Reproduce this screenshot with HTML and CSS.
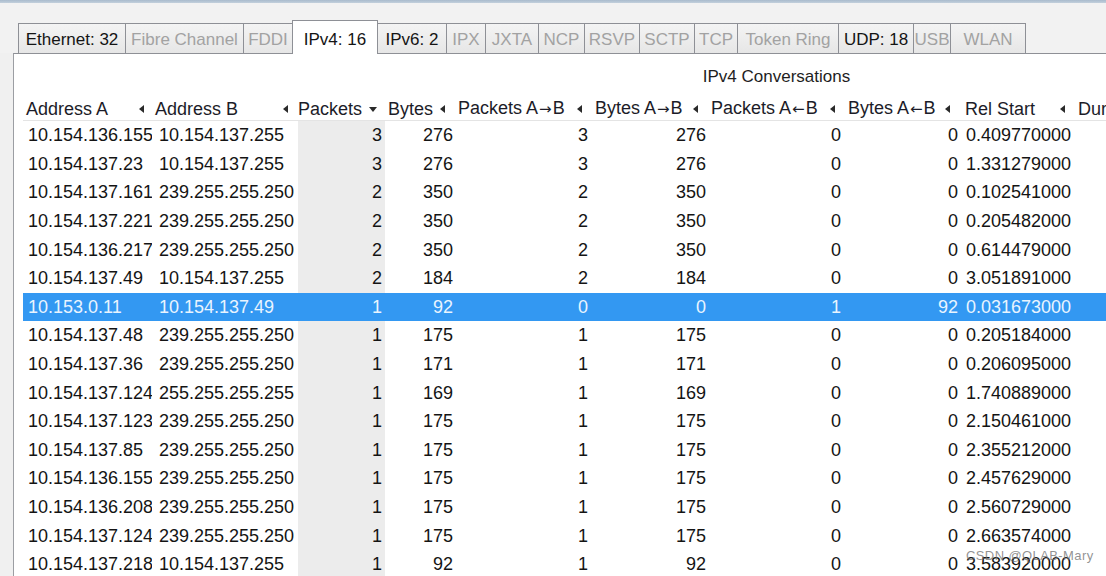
FILE: index.html
```html
<!DOCTYPE html>
<html>
<head>
<meta charset="utf-8">
<link rel="stylesheet" href="styles.css">
</head>
<body>
<div class="frame"></div>
<div class="tabs">
  <div class="tab">Ethernet: 32</div>
  <div class="tab dis">Fibre Channel</div>
  <div class="tab dis">FDDI</div>
  <div class="tab active">IPv4: 16</div>
  <div class="tab">IPv6: 2</div>
  <div class="tab dis">IPX</div>
  <div class="tab dis">JXTA</div>
  <div class="tab dis">NCP</div>
  <div class="tab dis">RSVP</div>
  <div class="tab dis">SCTP</div>
  <div class="tab dis">TCP</div>
  <div class="tab dis">Token Ring</div>
  <div class="tab">UDP: 18</div>
  <div class="tab dis">USB</div>
  <div class="tab dis">WLAN</div>
</div>
<div class="panel">
  <div class="sheet">
    <div class="title">IPv4 Conversations</div>
    <table class="grid">
      <colgroup>
        <col class="c-a"><col class="c-b"><col class="c-pk"><col class="c-by"><col class="c-pab"><col class="c-bab"><col class="c-pba"><col class="c-bba"><col class="c-rs"><col class="c-du">
      </colgroup>
      <thead>
        <tr>
          <th class="hpa"><span class="h">Address A<i class="tri"></i></span></th>
          <th><span class="h">Address B<i class="tri"></i></span></th>
          <th class="hp0"><span class="h">Packets<i class="tri down"></i></span></th>
          <th><span class="h">Bytes<i class="tri"></i></span></th>
          <th><span class="h"><span>Packets A<span class="arr">→</span>B</span><i class="tri"></i></span></th>
          <th><span class="h"><span>Bytes A<span class="arr">→</span>B</span><i class="tri"></i></span></th>
          <th><span class="h"><span>Packets A<span class="arr">←</span>B</span><i class="tri"></i></span></th>
          <th><span class="h"><span>Bytes A<span class="arr">←</span>B</span><i class="tri"></i></span></th>
          <th class="hp5"><span class="h">Rel Start<i class="tri"></i></span></th>
          <th><span class="h">Duration</span></th>
        </tr>
      </thead>
      <tbody>
        <tr><td class="a">10.154.136.155</td><td class="b">10.154.137.255</td><td class="pk">3</td><td class="by">276</td><td class="pab">3</td><td class="bab">276</td><td class="pba">0</td><td class="bba">0</td><td class="rs">0.409770000</td><td></td></tr>
        <tr><td class="a">10.154.137.23</td><td class="b">10.154.137.255</td><td class="pk">3</td><td class="by">276</td><td class="pab">3</td><td class="bab">276</td><td class="pba">0</td><td class="bba">0</td><td class="rs">1.331279000</td><td></td></tr>
        <tr><td class="a">10.154.137.161</td><td class="b">239.255.255.250</td><td class="pk">2</td><td class="by">350</td><td class="pab">2</td><td class="bab">350</td><td class="pba">0</td><td class="bba">0</td><td class="rs">0.102541000</td><td></td></tr>
        <tr><td class="a">10.154.137.221</td><td class="b">239.255.255.250</td><td class="pk">2</td><td class="by">350</td><td class="pab">2</td><td class="bab">350</td><td class="pba">0</td><td class="bba">0</td><td class="rs">0.205482000</td><td></td></tr>
        <tr><td class="a">10.154.136.217</td><td class="b">239.255.255.250</td><td class="pk">2</td><td class="by">350</td><td class="pab">2</td><td class="bab">350</td><td class="pba">0</td><td class="bba">0</td><td class="rs">0.614479000</td><td></td></tr>
        <tr><td class="a">10.154.137.49</td><td class="b">10.154.137.255</td><td class="pk">2</td><td class="by">184</td><td class="pab">2</td><td class="bab">184</td><td class="pba">0</td><td class="bba">0</td><td class="rs">3.051891000</td><td></td></tr>
        <tr class="sel"><td class="a">10.153.0.11</td><td class="b">10.154.137.49</td><td class="pk">1</td><td class="by">92</td><td class="pab">0</td><td class="bab">0</td><td class="pba">1</td><td class="bba">92</td><td class="rs">0.031673000</td><td></td></tr>
        <tr><td class="a">10.154.137.48</td><td class="b">239.255.255.250</td><td class="pk">1</td><td class="by">175</td><td class="pab">1</td><td class="bab">175</td><td class="pba">0</td><td class="bba">0</td><td class="rs">0.205184000</td><td></td></tr>
        <tr><td class="a">10.154.137.36</td><td class="b">239.255.255.250</td><td class="pk">1</td><td class="by">171</td><td class="pab">1</td><td class="bab">171</td><td class="pba">0</td><td class="bba">0</td><td class="rs">0.206095000</td><td></td></tr>
        <tr><td class="a">10.154.137.124</td><td class="b">255.255.255.255</td><td class="pk">1</td><td class="by">169</td><td class="pab">1</td><td class="bab">169</td><td class="pba">0</td><td class="bba">0</td><td class="rs">1.740889000</td><td></td></tr>
        <tr><td class="a">10.154.137.123</td><td class="b">239.255.255.250</td><td class="pk">1</td><td class="by">175</td><td class="pab">1</td><td class="bab">175</td><td class="pba">0</td><td class="bba">0</td><td class="rs">2.150461000</td><td></td></tr>
        <tr><td class="a">10.154.137.85</td><td class="b">239.255.255.250</td><td class="pk">1</td><td class="by">175</td><td class="pab">1</td><td class="bab">175</td><td class="pba">0</td><td class="bba">0</td><td class="rs">2.355212000</td><td></td></tr>
        <tr><td class="a">10.154.136.155</td><td class="b">239.255.255.250</td><td class="pk">1</td><td class="by">175</td><td class="pab">1</td><td class="bab">175</td><td class="pba">0</td><td class="bba">0</td><td class="rs">2.457629000</td><td></td></tr>
        <tr><td class="a">10.154.136.208</td><td class="b">239.255.255.250</td><td class="pk">1</td><td class="by">175</td><td class="pab">1</td><td class="bab">175</td><td class="pba">0</td><td class="bba">0</td><td class="rs">2.560729000</td><td></td></tr>
        <tr><td class="a">10.154.137.124</td><td class="b">239.255.255.250</td><td class="pk">1</td><td class="by">175</td><td class="pab">1</td><td class="bab">175</td><td class="pba">0</td><td class="bba">0</td><td class="rs">2.663574000</td><td></td></tr>
        <tr><td class="a">10.154.137.218</td><td class="b">10.154.137.255</td><td class="pk">1</td><td class="by">92</td><td class="pab">1</td><td class="bab">92</td><td class="pba">0</td><td class="bba">0</td><td class="rs">3.583920000</td><td></td></tr>
      </tbody>
    </table>
  </div>
</div>
<div class="wm">CSDN @QLAB-Mary</div>
</body>
</html>
```

FILE: styles.css
```css
html, body {
  margin: 0;
  padding: 0;
}
body {
  background: #f0f0f0;
  font-family: "Liberation Sans", Arial, sans-serif;
  color: #141414;
  width: 1106px;
  height: 576px;
  overflow: hidden;
}
.frame {
  height: 3px;
  background: linear-gradient(#a9bbcd, #c3d0dc);
}
.tabs {
  height: 50px;
  box-sizing: border-box;
  padding-left: 18px;
  display: flex;
  align-items: flex-end;
  background: #f2f2f2;
}
.tab {
  box-sizing: border-box;
  height: 30px;
  border: 1px solid #8e9096;
  border-bottom: none;
  margin-right: -1px;
  background: linear-gradient(#f4f4f4, #e6e6e6);
  font-size: 17px;
  line-height: 32px;
  text-align: center;
  white-space: nowrap;
  overflow: hidden;
  color: #141414;
}
.tab.dis { color: #a2a2a2; }
.tab.active {
  height: 34px;
  line-height: 38px;
  background: #ffffff;
  margin-bottom: -1px;
  position: relative;
  z-index: 1;
}
.tab:nth-child(1) { width: 108px; }
.tab:nth-child(2) { width: 119px; }
.tab:nth-child(3) { width: 50px; }
.tab:nth-child(4) { width: 86px; }
.tab:nth-child(5) { width: 70px; }
.tab:nth-child(6) { width: 40px; }
.tab:nth-child(7) { width: 54px; }
.tab:nth-child(8) { width: 47px; }
.tab:nth-child(9) { width: 56px; }
.tab:nth-child(10) { width: 56px; }
.tab:nth-child(11) { width: 44px; }
.tab:nth-child(12) { width: 102px; }
.tab:nth-child(13) { width: 76px; }
.tab:nth-child(14) { width: 38px; }
.tab:nth-child(15) { width: 76px; }

.panel {
  margin-left: 13px;
  height: 523px;
  background: #ffffff;
  border-top: 1px solid #8e9096;
  border-left: 1px solid #9c9ea3;
  overflow: hidden;
}
.sheet {
  width: 1525px;
}
.title {
  text-align: center;
  font-size: 17px;
  line-height: 24px;
  padding-top: 11px;
  height: 24px;
  margin-bottom: 7px;
  color: #1e1e1e;
}
.grid {
  margin-left: 9px;
  border-collapse: collapse;
  table-layout: fixed;
  width: 1500px;
  font-size: 18px;
}
.c-a { width: 129px; }
.c-b { width: 146px; }
.c-pk { width: 87px; }
.c-by { width: 70px; }
.c-pab { width: 137px; }
.c-bab { width: 116px; }
.c-pba { width: 137px; }
.c-bba { width: 115px; }
.c-rs { width: 115px; }
.c-du { width: auto; }

th {
  height: 24px;
  padding: 2px 10px 0 3px;
  font-weight: normal;
  text-align: left;
  border-bottom: 1px solid #e4e4e4;
  color: #1c1c28;
  white-space: nowrap;
  overflow: hidden;
  box-sizing: border-box;
}
th.hpa { padding-right: 8px; }
th.hp0 { padding-left: 0; padding-right: 8px; }
th.hp5 { padding-left: 5px; }
.h {
  display: flex;
  align-items: center;
  justify-content: space-between;
  line-height: 21px;
}
.arr {
  font-family: "DejaVu Sans", sans-serif;
  font-size: 15px;
  padding: 0 1px;
}
.tri {
  display: block;
  flex: none;
  width: 0;
  height: 0;
  border-top: 4px solid transparent;
  border-bottom: 4px solid transparent;
  border-right: 5px solid #2a2a2a;
}
.tri.down {
  border-left: 4px solid transparent;
  border-right: 4px solid transparent;
  border-top: 5px solid #2a2a2a;
  border-bottom: none;
}

td {
  height: 28.6px;
  padding: 0;
  white-space: nowrap;
  overflow: hidden;
  line-height: 20px;
}
td.a { padding-left: 5px; }
td.b { padding-left: 7px; }
td.pk { text-align: right; padding-right: 3px; background: #ececec; }
td.by { text-align: right; padding-right: 2px; }
td.pab { text-align: right; padding-right: 4px; }
td.bab { text-align: right; padding-right: 2px; }
td.pba { text-align: right; padding-right: 4px; }
td.bba { text-align: right; padding-right: 2px; }
td.rs { padding-left: 6px; }

tr.sel td {
  background: #3398f2;
  color: #e9f4ff;
}

.wm {
  position: absolute;
  left: 966px;
  top: 548px;
  font-size: 13px;
  letter-spacing: 0.4px;
  color: rgba(110, 110, 110, 0.75);
  white-space: nowrap;
}
```
